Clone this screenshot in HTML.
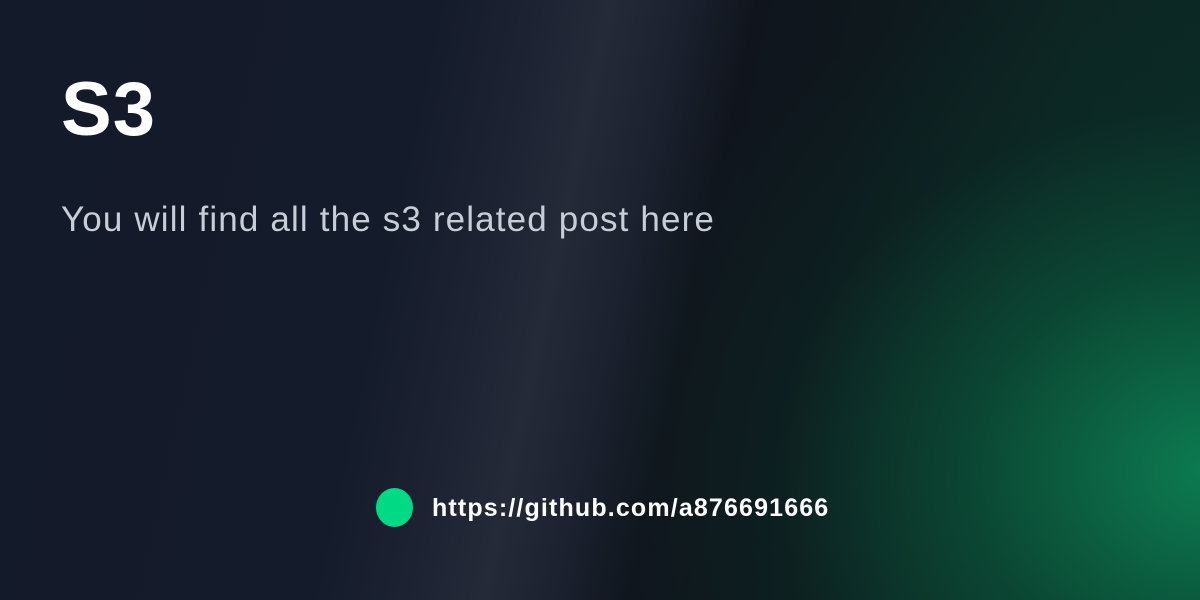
<!DOCTYPE html>
<html><head><style>
html,body{margin:0;padding:0;}
body{width:1200px;height:600px;overflow:hidden;position:relative;font-family:"Liberation Sans",sans-serif;
background:
radial-gradient(ellipse 620px 520px at 1210px 470px, rgba(12,128,84,0.95) 0%, rgba(10,90,60,0.6) 40%, rgba(10,50,40,0.25) 70%, transparent 100%),
linear-gradient(102deg, #131a2a 0%, #141b2a 33%, #1c2231 40%, #242a38 46%, #1c2230 51%, #10151d 57%, #0e181d 66%, #0d2523 82%, #0c2a26 100%);}
.t{position:absolute;left:61px;top:66px;font-size:76px;font-weight:bold;color:#fff;letter-spacing:1px;}
.s{position:absolute;left:61px;top:200px;font-size:35px;color:#c9cdd6;letter-spacing:1.15px;}
.dot{position:absolute;left:376px;top:488px;width:37px;height:39px;border-radius:50%;background:#00da85;}
.l{position:absolute;left:432px;top:494px;font-size:25px;font-weight:bold;color:#fff;letter-spacing:1.15px;}
</style></head><body>
<div class="t">S3</div>
<div class="s">You will find all the s3 related post here</div>
<div class="dot"></div>
<div class="l">https://github.com/a876691666</div>
</body></html>
